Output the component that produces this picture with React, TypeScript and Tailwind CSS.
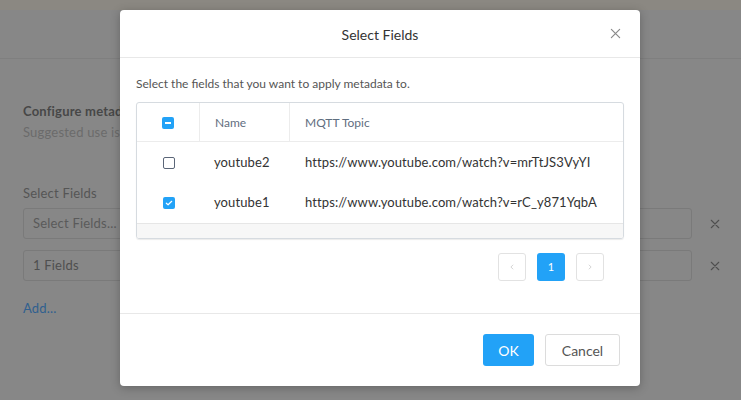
import React from "react";

const font = { fontFamily: "Lato, 'Open Sans', sans-serif" };

function XIcon({ className }: { className?: string }) {
  return (
    <svg viewBox="0 0 12 12" className={className} fill="none" stroke="currentColor" strokeWidth={1.3} strokeLinecap="round">
      <path d="M1.5 1.5 L10.5 10.5 M10.5 1.5 L1.5 10.5" />
    </svg>
  );
}

function Checkbox({ state }: { state: "none" | "some" | "all" }) {
  if (state === "none") {
    return <div className="w-[12px] h-[12px] rounded-[2px] border border-[#5b6678] bg-white" />;
  }
  return (
    <div className="w-[12px] h-[12px] rounded-[2px] bg-[#22a2f7] flex items-center justify-center">
      {state === "some" ? (
        <div className="w-[6px] h-[1.5px] bg-white" />
      ) : (
        <svg viewBox="0 0 12 12" className="w-[12px] h-[12px]" fill="none" stroke="white" strokeWidth={1.2} strokeLinecap="round" strokeLinejoin="round">
          <path d="M3.3 6.2 L5.1 7.8 L8.7 4.3" />
        </svg>
      )}
    </div>
  );
}

export default function App() {
  const rows = [
    { name: "youtube2", url: "https://www.youtube.com/watch?v=mrTtJS3VyYI", checked: false },
    { name: "youtube1", url: "https://www.youtube.com/watch?v=rC_y871YqbA", checked: true },
  ];
  return (
    <div className="relative w-[741px] h-[400px] overflow-hidden bg-[#878787]" style={font}>
      {/* background page */}
      <div className="h-[10px] bg-[#8b8882]" />
      <div className="h-[49px] border-b border-[#7f7f7f]" />
      <div className="px-[23px] pt-[43px]">
        <div className="text-[13px] font-bold text-[#474747] leading-[18px] tracking-[0.2px]">Configure metadata</div>
        <div className="text-[13px] text-[#6b6b6b] leading-[18px] mt-[3px] tracking-[0.2px]">Suggested use is</div>
        <div className="text-[13px] text-[#555] leading-[18px] mt-[43px] tracking-[0.2px]">Select Fields</div>
        <div className="flex items-center mt-[6px]">
          <div className="shrink-0 w-[669px] h-[31px] border border-[#7a7a7a] rounded-[3px] flex items-center px-[9px] text-[13px] text-[#5a5a5a] tracking-[0.2px]">Select Fields...</div>
          <XIcon className="shrink-0 w-[10px] h-[10px] text-[#4f4f4f] ml-[18px]" />
        </div>
        <div className="flex items-center mt-[11px]">
          <div className="shrink-0 w-[669px] h-[31px] border border-[#7a7a7a] rounded-[3px] flex items-center px-[9px] text-[13px] text-[#4f4f4f] tracking-[0.2px]">1 Fields</div>
          <XIcon className="shrink-0 w-[10px] h-[10px] text-[#4f4f4f] ml-[18px]" />
        </div>
        <div className="text-[13px] text-[#30608f] mt-[18px] tracking-[0.2px]">Add...</div>
      </div>

      {/* modal */}
      <div className="absolute left-[120px] top-[10px] w-[520px] h-[376px] bg-white rounded-[4px] shadow-[0_2px_10px_rgba(0,0,0,0.25)] flex flex-col">
        <div className="relative h-[48px] border-b border-[#e8e8e8] flex items-center justify-center shrink-0">
          <span className="text-[14px] text-[#333] pt-[2px]">Select Fields</span>
          <XIcon className="absolute right-[19px] top-[18px] w-[11px] h-[11px] text-[#8a8a8a]" />
        </div>
        <div className="px-[16px] pt-[19px] flex-1">
          <div className="text-[12px] text-[#555] leading-[14px]">Select the fields that you want to apply metadata to.</div>
          <div className="mt-[11px] border border-[#d6dbe0] rounded-[3px] overflow-hidden shadow-[0_1px_1px_rgba(0,0,0,0.08)]">
            <div className="flex h-[39px] border-b border-[#ececec] text-[12px] text-[#5f6e80]">
              <div className="w-[63px] border-r border-[#ececec] flex items-center justify-center pt-[2px]">
                <Checkbox state="some" />
              </div>
              <div className="w-[90px] border-r border-[#ececec] flex items-center pl-[15px] pt-[1px]">Name</div>
              <div className="flex-1 flex items-center pl-[15px] pt-[1px]">MQTT Topic</div>
            </div>
            {rows.map((r, i) => (
              <div key={r.name} className={`flex ${i === 0 ? "h-[41px]" : "h-[40px]"} text-[13px] text-[#333] tracking-[0.1px]`}>
                <div className="w-[63px] flex items-center justify-center">
                  <Checkbox state={r.checked ? "all" : "none"} />
                </div>
                <div className="w-[90px] flex items-center pl-[14px]">{r.name}</div>
                <div className="flex-1 flex items-center pl-[15px]">{r.url}</div>
              </div>
            ))}
            <div className="h-[15px] bg-[#f7f7f7] border-t border-[#e6e6e6]" />
          </div>
          <div className="flex justify-end gap-[11px] pr-[20px] mt-[14px]">
            <div className="w-[28px] h-[28px] border border-[#e2e2e2] rounded-[3px] flex items-center justify-center text-[#c4c4c4]">
              <svg viewBox="0 0 8 8" className="w-[6px] h-[6px]" fill="none" stroke="currentColor" strokeWidth={1}><path d="M5.5 1 L2.5 4 L5.5 7" /></svg>
            </div>
            <div className="w-[28px] h-[28px] bg-[#22a2f7] rounded-[3px] flex items-center justify-center text-white text-[11px]">1</div>
            <div className="w-[28px] h-[28px] border border-[#e2e2e2] rounded-[3px] flex items-center justify-center text-[#c4c4c4]">
              <svg viewBox="0 0 8 8" className="w-[6px] h-[6px]" fill="none" stroke="currentColor" strokeWidth={1}><path d="M2.5 1 L5.5 4 L2.5 7" /></svg>
            </div>
          </div>
        </div>
        <div className="h-[73px] border-t border-[#e8e8e8] flex items-start justify-end gap-[11px] pt-[20px] pr-[20px] shrink-0">
          <div className="w-[51px] h-[32px] bg-[#22a2f7] rounded-[3px] flex items-center justify-center text-white text-[14px]">OK</div>
          <div className="w-[75px] h-[32px] border border-[#dcdcdc] rounded-[3px] flex items-center justify-center text-[#555] text-[14px]">Cancel</div>
        </div>
      </div>
    </div>
  );
}
